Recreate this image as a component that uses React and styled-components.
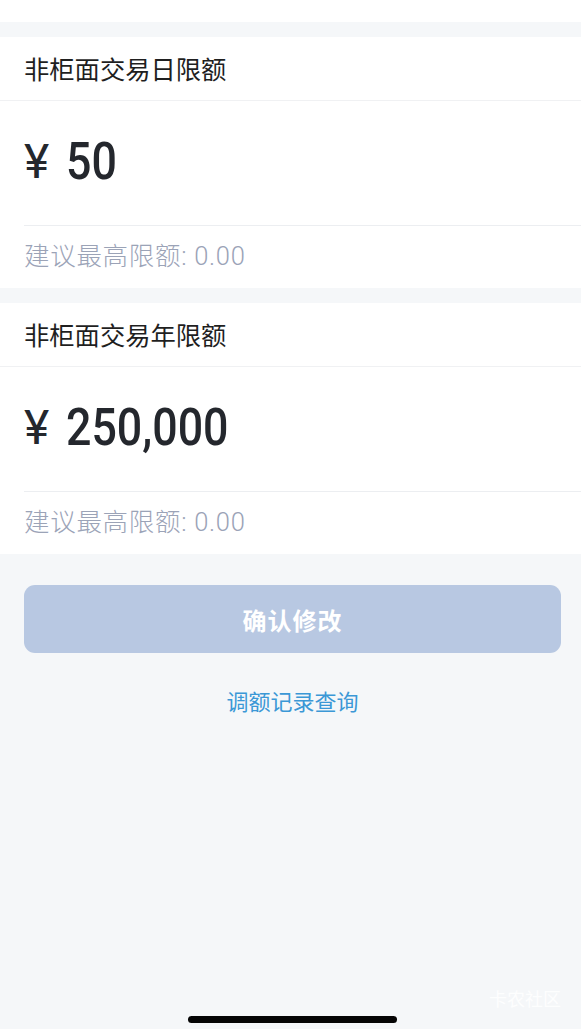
import styled, { createGlobalStyle } from "styled-components"

const GlobalStyle = createGlobalStyle`
  html, body {
    margin: 0;
    padding: 0;
    background: #f5f7f9;
  }
  body {
    font-family: "Noto Sans CJK SC", "Noto Sans", sans-serif;
  }
`

const limits = [
  { title: "非柜面交易日限额", amount: "50", hint: "建议最高限额: 0.00" },
  { title: "非柜面交易年限额", amount: "250,000", hint: "建议最高限额: 0.00" },
]

export default function App() {
  return (
    <Page>
      <GlobalStyle />
      <TopStrip />
      {limits.map((item, index) => (
        <Card key={index}>
          <CardTitle>{item.title}</CardTitle>
          <AmountRow>
            <Currency>¥</Currency>
            <Amount>{item.amount}</Amount>
          </AmountRow>
          <Hint>{item.hint}</Hint>
        </Card>
      ))}
      <Actions>
        <ConfirmButton disabled>确认修改</ConfirmButton>
        <RecordLink>调额记录查询</RecordLink>
      </Actions>
      <Watermark>卡农社区</Watermark>
      <HomeBar />
    </Page>
  )
}

const Page = styled.div`
  position: relative;
  width: 581px;
  height: 1029px;
  background: #f5f7f9;
  overflow: hidden;
`

const TopStrip = styled.div`
  height: 22px;
  background: #ffffff;
`

const Card = styled.div`
  margin-top: 15px;
  background: #ffffff;
`

const CardTitle = styled.div`
  height: 64px;
  box-sizing: border-box;
  display: flex;
  align-items: center;
  padding: 0 0 0 24px;
  font-size: 25.3px;
  line-height: 1;
  color: #1f1f1f;
  border-bottom: 1px solid #f0f1f3;
`

const AmountRow = styled.div`
  height: 125px;
  box-sizing: border-box;
  display: flex;
  align-items: center;
  margin-left: 24px;
  border-bottom: 1px solid #eceef1;
  color: #24272d;
  font-family: Roboto, "Liberation Sans", sans-serif;
  white-space: nowrap;
`

const Currency = styled.span`
  font-size: 48px;
  font-weight: 400;
  width: 42px;
  margin-top: -4px;
`

const Amount = styled.span`
  font-weight: 500;
  font-size: 52px;
  transform: scaleX(0.86);
  transform-origin: left center;
  margin-top: -4px;
`

const Hint = styled.div`
  height: 62px;
  box-sizing: border-box;
  display: flex;
  align-items: center;
  padding: 0 0 0 24px;
  font-family: Roboto, "Noto Sans CJK SC", sans-serif;
  font-size: 25.5px;
  font-weight: 300;
  line-height: 1;
  letter-spacing: 0.7px;
  color: #9ba3b7;
  white-space: pre;
`

const Actions = styled.div`
  padding: 31px 20px 0 24px;
  display: flex;
  flex-direction: column;
  align-items: stretch;
`

const ConfirmButton = styled.button`
  height: 68px;
  border: none;
  border-radius: 11px;
  background: #b8c8e2;
  color: #ffffff;
  font-family: "Noto Sans CJK SC", sans-serif;
  font-size: 24px;
  font-weight: 700;
  letter-spacing: 1px;
`

const RecordLink = styled.div`
  margin-top: 31px;
  text-align: center;
  font-size: 22px;
  color: #3b98d6;
`

const Watermark = styled.div`
  position: absolute;
  right: 20px;
  bottom: 18px;
  font-size: 18px;
  color: rgba(255, 255, 255, 0.9);
`

const HomeBar = styled.div`
  position: absolute;
  left: 188px;
  bottom: 6px;
  width: 209px;
  height: 7px;
  border-radius: 4px;
  background: #050505;
`
